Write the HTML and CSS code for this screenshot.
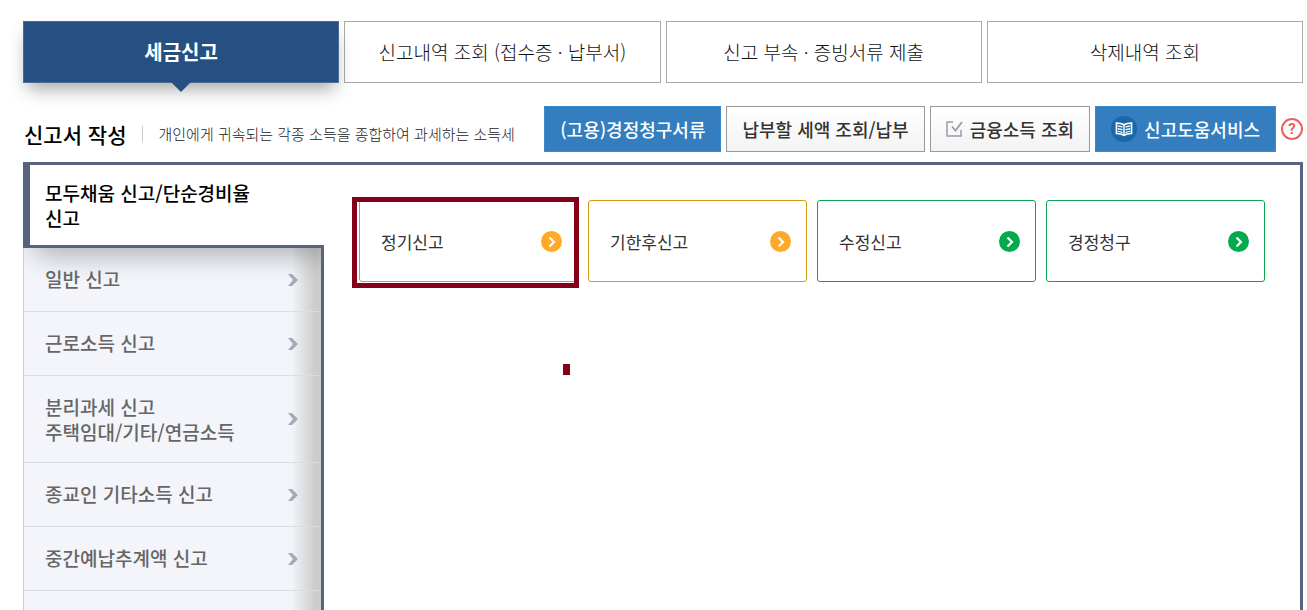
FILE: index.html
```html
<!DOCTYPE html>
<html lang="ko">
<head>
  <meta charset="UTF-8">
  <meta name="viewport" content="width=device-width, initial-scale=1">
  <title>세금신고</title>
  <link rel="stylesheet" href="styles.css">
</head>
<body>
  <!-- icons used more than once -->
  <svg class="icon-defs" aria-hidden="true">
    <symbol id="chevron" viewBox="0 0 10 12">
      <path d="M0 0h4l6 6-6 6H0l5-6z" fill="currentColor"/>
    </symbol>
    <symbol id="go" viewBox="0 0 21 21">
      <circle cx="10.5" cy="10.5" r="10.5" fill="currentColor"/>
      <path d="M8.500 6.500L13 11l-4.500 4.500" fill="none" stroke="#fff" stroke-width="2.200"/>
    </symbol>
  </svg>

  <nav class="tabs">
    <a class="tab active" href="#">세금신고</a>
    <a class="tab" href="#">신고내역 조회 (접수증 · 납부서)</a>
    <a class="tab" href="#">신고 부속 · 증빙서류 제출</a>
    <a class="tab" href="#">삭제내역 조회</a>
  </nav>

  <header class="heading">
    <h1>신고서 작성</h1>
    <p>개인에게 귀속되는 각종 소득을 종합하여 과세하는 소득세</p>
    <div class="actions">
      <button class="btn blue" type="button">(고용)경정청구서류</button>
      <button class="btn" type="button">납부할 세액 조회/납부</button>
      <button class="btn" type="button">
        <svg class="icon-check" viewBox="0 0 17 16" fill="none" stroke="#9a9ca6" aria-hidden="true">
          <path d="M7 1H1v14h14V9" stroke-width="1.500"/>
          <path d="M6 5.500l3.500 4L16 1" stroke-width="1.800"/>
        </svg>
        금융소득 조회
      </button>
      <button class="btn blue" type="button">
        <svg class="icon-book" viewBox="0 0 26 26" aria-hidden="true">
          <circle cx="13" cy="13" r="13" fill="#1a68a9"/>
          <path d="M5.500 7c3 .1 5.500.6 7.500 1.800 2-1.200 4.500-1.700 7.500-1.800v10.500c-3 .1-5.500.6-7.500 1.800-2-1.200-4.500-1.700-7.500-1.800z" fill="none" stroke="#fff" stroke-width="1.700"/>
          <path d="M13 8.500v11M7 10c1.600.1 3.200.5 4.500 1.200M7 12.700c1.600.1 3.200.5 4.500 1.200M7 15.400c1.600.1 3.200.5 4.500 1.200M19 10c-1.600.1-3.200.5-4.500 1.200M19 12.700c-1.600.1-3.200.5-4.500 1.200M19 15.400c-1.600.1-3.200.5-4.500 1.200" fill="none" stroke="#fff" stroke-width="1.400"/>
        </svg>
        신고도움서비스
      </button>
      <button class="help" type="button" aria-label="도움말">?</button>
    </div>
  </header>

  <main class="panel">
    <nav class="side">
      <a class="side-active" href="#">모두채움 신고/단순경비율<br>신고</a>
      <div class="side-list">
        <a href="#">일반 신고<svg><use href="#chevron"/></svg></a>
        <a href="#">근로소득 신고<svg><use href="#chevron"/></svg></a>
        <a href="#">분리과세 신고<br>주택임대/기타/연금소득<svg><use href="#chevron"/></svg></a>
        <a href="#">종교인 기타소득 신고<svg><use href="#chevron"/></svg></a>
        <a href="#">중간예납추계액 신고<svg><use href="#chevron"/></svg></a>
      </div>
    </nav>

    <section class="content">
      <div class="cards">
        <a class="card orange selected" href="#">정기신고<svg><use href="#go"/></svg></a>
        <a class="card orange" href="#">기한후신고<svg><use href="#go"/></svg></a>
        <a class="card green" href="#">수정신고<svg><use href="#go"/></svg></a>
        <a class="card green" href="#">경정청구<svg><use href="#go"/></svg></a>
      </div>
      <span class="marker"></span>
    </section>
  </main>
</body>
</html>
```

FILE: styles.css
```css
* {
  box-sizing: border-box;
}

body {
  display: flex;
  flex-direction: column;
  height: 100vh;
  margin: 0;
  padding: 21px 4px 0 23px;
  overflow: hidden;
  background: #fff;
  color: #333;
  font-family: "Noto Sans CJK KR", sans-serif;
}

a {
  color: inherit;
  text-decoration: none;
}

.icon-defs {
  position: absolute;
  width: 0;
  height: 0;
}

/* top tabs */
.tabs {
  display: grid;
  grid-template-columns: repeat(4, 1fr);
  gap: 5px;
}

.tab {
  display: flex;
  align-items: center;
  justify-content: center;
  height: 62px;
  padding-bottom: 2px;
  border: 1px solid #aaa;
  color: #111;
  font-size: 19px;
  font-weight: 300;
  white-space: nowrap;
}

.tab.active {
  position: relative;
  border-color: #4a6c95;
  background: #265081;
  box-shadow: 0 10px 18px -4px rgba(0, 0, 0, 0.35);
  color: #fff;
  font-size: 20px;
  font-weight: 700;
}

.tab.active::after {
  content: "";
  position: absolute;
  top: 60px;
  left: 50%;
  margin-left: -10px;
  border: 10px solid transparent;
  border-top-color: #265081;
  border-bottom: 0;
}

/* title row */
.heading {
  display: flex;
  align-items: center;
  margin: 23px 0 10px;
}

.heading h1 {
  margin: 10px 16px 0 1px;
  color: #000;
  font-size: 21px;
  font-weight: 500;
  line-height: 30px;
  white-space: nowrap;
}

.heading p {
  margin: 10px 0 0;
  padding-left: 15px;
  border-left: 1px solid #ccc;
  color: #222;
  font-size: 15px;
  font-weight: 300;
  line-height: 16px;
  white-space: nowrap;
}

.actions {
  display: flex;
  align-items: center;
  gap: 5px;
  margin-left: auto;
}

.btn {
  display: flex;
  align-items: center;
  height: 46px;
  padding: 0 15px;
  border: 1px solid #999;
  background: linear-gradient(#fff, #f3f3f3);
  color: #333;
  font-family: inherit;
  font-size: 18px;
  font-weight: 500;
  white-space: nowrap;
  cursor: pointer;
}

.btn.blue {
  border-color: #3a8ad0;
  background: #347dbe;
  color: #fff;
}

.icon-check {
  width: 17px;
  height: 16px;
  margin-right: 7px;
}

.icon-book {
  width: 26px;
  height: 26px;
  margin-right: 7px;
}

.help {
  width: 22px;
  height: 22px;
  padding: 0;
  border: 2px solid #ed6060;
  border-radius: 50%;
  background: #fff;
  color: #ed6060;
  font-family: Roboto, sans-serif;
  font-size: 15px;
  font-weight: 700;
  line-height: 18px;
  cursor: pointer;
}

/* main panel */
.panel {
  display: flex;
  flex: 1;
  min-height: 0;
  border-top: 3px solid #58647f;
  border-right: 3px solid #58647f;
}

.side {
  display: flex;
  flex-direction: column;
  width: 301px;
  color: #666;
  font-size: 19px;
  font-weight: 500;
  line-height: 25px;
}

.side-active {
  z-index: 1;
  padding: 15px;
  border-left: 7px solid #58647f;
  border-bottom: 3px solid #58647f;
  background: #fff;
  color: #000;
}

.side-list {
  position: relative;
  flex: 1;
  padding-right: 2px;
  overflow: hidden;
  border-left: 1px solid #ccc;
  border-right: 3px solid #58647f;
  background:
    linear-gradient(to right, transparent, rgba(200, 200, 200, 0.9) 80%) right / 30px 100% no-repeat,
    #f3f5fb;
}

/* shadow cast by the open item */
.side-list::before {
  content: "";
  position: absolute;
  top: -20px;
  left: 15px;
  right: 0;
  height: 20px;
  box-shadow: 0 2px 28px 4px rgba(0, 0, 0, 0.32);
}

.side-list a {
  position: relative;
  display: block;
  padding: 18px 21px 20px;
  border-bottom: 1px solid #dcdde0;
}

.side-list a:has(br) {
  padding: 18px 21px;
}

.side-list svg {
  position: absolute;
  top: calc(50% - 6px);
  right: 21px;
  width: 10px;
  height: 12px;
  color: #a6aab8;
}

.content {
  position: relative;
  flex: 1;
  padding: 35px;
}

.cards {
  display: grid;
  grid-template-columns: repeat(4, 1fr);
  gap: 10px;
}

.card {
  position: relative;
  display: flex;
  align-items: center;
  justify-content: space-between;
  height: 82px;
  padding: 0 15px 0 21px;
  border: 1px solid;
  border-radius: 3px;
  font-size: 17px;
}

.card svg {
  width: 21px;
  height: 21px;
}

.orange {
  border-color: #d49c10;
}

.orange svg {
  color: #ffaa26;
}

.green {
  border-color: #09a650;
}

.green svg {
  color: #05a94e;
}

.selected::after {
  content: "";
  position: absolute;
  inset: -4px -2px -7px -8px;
  border: 5px solid #850019;
}

.marker {
  position: absolute;
  top: 199px;
  left: 239px;
  width: 7px;
  height: 11px;
  background: #850019;
}
```
